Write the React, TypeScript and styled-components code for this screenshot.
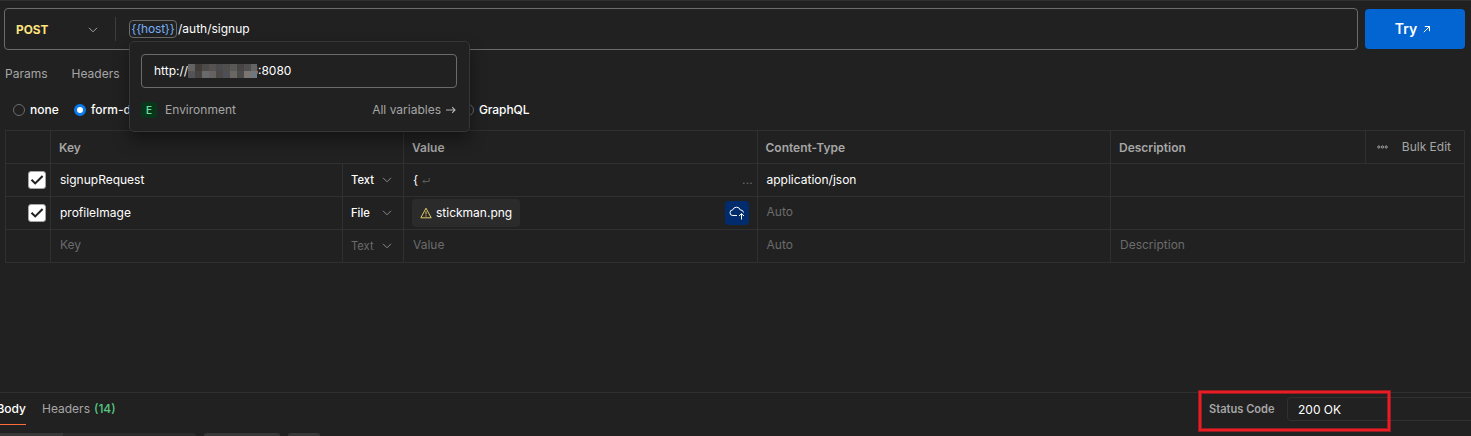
import React from 'react';
import styled, { createGlobalStyle, css } from 'styled-components';

const Global = createGlobalStyle`
  * { box-sizing: border-box; }
  html, body { margin: 0; background: #212121; overflow: hidden; }
  body { font-family: Inter, "Liberation Sans", sans-serif; font-size: 12px; color: #fff; }
`;

const Page = styled.main`
  height: 436px;
  width: 1471px;
  overflow: hidden;
  display: flex;
  flex-direction: column;
  background: #212121;
  border-top: 1px solid #303030;
  padding-top: 1px;
`;

const Text = styled.span<{ $size?: number; $weight?: number; $color?: string; $spacing?: number }>`
  font-size: ${p => p.$size ?? 12}px;
  font-weight: ${p => p.$weight ?? 400};
  color: ${p => p.$color ?? '#fff'};
  letter-spacing: ${p => p.$spacing ?? 0}px;
  line-height: 16px;
  white-space: nowrap;
`;

const RequestBar = styled.header`
  display: flex;
  align-items: center;
  gap: 7px;
  padding: 6px 0 0 4px;
`;

const UrlBox = styled.div`
  position: relative;
  width: 1354px;
  height: 42px;
  border: 1px solid #6b6b6b;
  border-radius: 4px;
  display: flex;
  align-items: center;
`;

const Method = styled.div`
  width: 111px;
  height: 24px;
  padding: 1px 17px 0 11px;
  border-right: 1px solid #3d3d3d;
  display: flex;
  align-items: center;
  justify-content: space-between;
`;

const UrlText = styled.div`
  display: flex;
  align-items: center;
  gap: 1px;
  padding: 0 0 0 13px;
`;

const Variable = styled.span`
  height: 18px;
  width: 48px;
  display: flex;
  align-items: center;
  justify-content: center;
  border: 1px solid #6b6b6b;
  border-radius: 4px;
`;

const TryButton = styled.button`
  width: 100px;
  height: 40px;
  border: 0;
  border-radius: 4px;
  background: #0265d2;
  font-family: inherit;
  padding: 0 4px 0 0;
  display: flex;
  align-items: center;
  justify-content: center;
  gap: 6px;
`;

const Popover = styled.section`
  position: absolute;
  z-index: 2;
  left: 123.5px;
  top: 32px;
  width: 341px;
  height: 91px;
  padding: 12px 11.5px 0;
  background: #212121;
  border: 1px solid #363636;
  border-radius: 5px;
  box-shadow: 0 8px 16px rgba(0, 0, 0, 0.4);
`;

const ValueField = styled.div`
  height: 34px;
  width: 316px;
  display: flex;
  align-items: center;
  padding-left: 12px;
  border: 1px solid #6b6b6b;
  border-radius: 4px;
`;

const Mask = styled.svg`
  display: block;
  flex: none;
  position: relative;
  z-index: 1;
  margin-right: -6.6px;
`;

const PopoverFooter = styled.div`
  display: flex;
  align-items: center;
  height: 16px;
  margin-top: 14px;
  gap: 8px;
`;

const EnvBadge = styled.span`
  width: 16px;
  height: 16px;
  border-radius: 3px;
  background: #07361a;
  display: flex;
  align-items: center;
  justify-content: center;
`;

const AllVariables = styled.span`
  margin-left: auto;
  display: flex;
  align-items: center;
  gap: 4px;
`;

const Tabs = styled.nav`
  display: flex;
  gap: 24px;
  padding: 16px 0 0 5px;
  height: 48px;
`;

const BodyTypes = styled.div`
  display: flex;
  align-items: center;
  height: 24px;
  padding-left: 13px;
`;

const Option = styled.label<{ $width: number }>`
  display: flex;
  align-items: center;
  gap: 5px;
  width: ${p => p.$width}px;
`;

const Radio = styled.span<{ $on?: boolean }>`
  width: 12px;
  height: 12px;
  flex: none;
  border-radius: 50%;
  border: 1px solid #6b6b6b;
  ${p => p.$on && css`
    border: 3px solid #097bed;
    background: #fff;
  `}
`;

const Table = styled.div`
  width: 1460px;
  margin: 8px 0 0 5px;
  border: 1px solid #303030;
  border-bottom: 0;
`;

const Row = styled.div<{ $head?: boolean }>`
  display: grid;
  height: 33px;
  grid-template-columns: ${p => (p.$head ? '45px 353px 354px 353px 255px 98px' : '45px 292px 61px 354px 353px 353px')};
  border-bottom: 1px solid #303030;
`;

const Cell = styled.div<{ $left?: number; $right?: number; $top?: number; $bottom?: number }>`
  display: flex;
  align-items: center;
  min-width: 0;
  padding: ${p => p.$top ?? 0}px ${p => p.$right ?? 0}px ${p => p.$bottom ?? 0}px ${p => p.$left ?? 8}px;
  border-right: 1px solid #303030;
  &:last-child { border-right: 0; }
`;

const Spread = styled(Cell)`
  justify-content: space-between;
`;

const Checkbox = styled.span`
  width: 18px;
  height: 18px;
  border-radius: 3px;
  background: #fff;
  border: 1px solid #a6a6a6;
  display: flex;
  align-items: center;
  justify-content: center;
`;

const FileChip = styled.span`
  display: flex;
  align-items: center;
  gap: 4px;
  height: 28px;
  width: 108px;
  padding-left: 8px;
  border-radius: 4px;
  background: #2b2b2b;
`;

const UploadButton = styled.span`
  width: 24px;
  height: 24px;
  border-radius: 4px;
  background: #002c6e;
  display: flex;
  align-items: center;
  justify-content: center;
`;

const Response = styled.section`
  margin-top: auto;
  height: 44px;
  flex: none;
  border-top: 1px solid #303030;
`;

const ResponseBar = styled.div`
  display: flex;
  height: 40px;
  justify-content: space-between;
`;

const ResponseTabs = styled.div`
  display: flex;
  gap: 16px;
`;

const ResponseTab = styled.div<{ $active?: boolean }>`
  height: 32px;
  padding-top: 8px;
  display: flex;
  gap: 4px;
  border-bottom: 1px solid ${p => (p.$active ? '#ff6c37' : 'transparent')};
  ${p => p.$active && css`
    width: 26px;
    justify-content: flex-end;
  `}
`;

const Status = styled.div`
  position: relative;
  display: flex;
  align-items: flex-start;
  width: 262px;
`;

const StatusLabel = styled.div`
  width: 78px;
  padding-top: 8px;
`;

const StatusValue = styled.div`
  flex: 1;
  height: 24px;
  margin-top: 4px;
  padding: 4px 0 0 10px;
  border: 1px solid #303030;
  border-right: 0;
  border-radius: 4px 0 0 4px;
`;

const Highlight = styled.div`
  position: absolute;
  left: -10px;
  top: -2px;
  width: 191px;
  height: 40px;
  border: 2px solid #ed1c24;
  box-shadow: 0 0 0 1px rgba(237, 28, 36, 0.55), inset 0 0 0 1px rgba(237, 28, 36, 0.55);
`;

const Toolbar = styled.div`
  display: flex;
  gap: 8px;
  height: 3px;
`;

const Segment = styled.div`
  width: 196px;
  background: #2b2b2b;
  border-top-right-radius: 4px;
`;

const SegmentActive = styled.div`
  width: 63px;
  height: 3px;
  background: #383838;
`;

const ToolButton = styled.div<{ $width: number }>`
  width: ${p => p.$width}px;
  border-radius: 4px 4px 0 0;
  background: #383838;
`;

const Chevron = ({ color = '#8a8a8a' }: { color?: string }) => (
  <svg width="10" height="6" viewBox="0 0 10 6" fill="none" stroke={color}>
    <path d="M1 .8l4 4 4-4" />
  </svg>
);

const Tick = () => (
  <svg width="14" height="12" viewBox="0 0 14 12" fill="none" stroke="#212121" strokeWidth="2.1">
    <path d="M1.5 5.8l3.7 3.6L12.6 2" />
  </svg>
);

const maskRows = [
  ['#636363', '#3f3c3a', '#4d4b49', '#555251', '#4b4a4c', '#504f4e', '#595856', '#484446', '#504f50', '#666465'],
  ['#525457', '#474343', '#696a6c', '#656261', '#4c4846', '#4e4f57', '#6a6661', '#4c494b', '#7a7573', '#6f7780'],
];

const MUTED = '#a6a6a6';
const FAINT = '#6b6b6b';

export default function App() {
  return (
    <>
      <Global />
      <Page>
        <RequestBar>
          <UrlBox>
            <Method>
              <Text $weight={700} $color="#ffe47e" $size={11.8}>POST</Text>
              <Chevron color="#a6a6a6" />
            </Method>
            <UrlText>
              <Variable><Text $spacing={-0.2} $color="#74aef6">{'{{host}}'}</Text></Variable>
              <Text>/auth/signup</Text>
            </UrlText>
            <Popover>
              <ValueField>
                <Text>http://</Text>
                <Mask width="69" height="14" shapeRendering="crispEdges">
                  {maskRows.map((row, y) =>
                    row.map((fill, x) => <rect key={`${x}-${y}`} x={x * 7} y={y * 7} width="7" height="7" fill={fill} />),
                  )}
                </Mask>
                <Text>6:8080</Text>
              </ValueField>
              <PopoverFooter>
                <EnvBadge><Text $size={10} $weight={600} $color="#6bdd9a">E</Text></EnvBadge>
                <Text $color={MUTED}>Environment</Text>
                <AllVariables>
                  <Text $color={MUTED}>All variables</Text>
                  <svg width="12" height="10" viewBox="0 0 12 10" fill="none" stroke="#b4b4b4" strokeWidth="1.1">
                    <path d="M1 5h9M7.2 2.2L10 5 7.2 7.8" />
                  </svg>
                </AllVariables>
              </PopoverFooter>
            </Popover>
          </UrlBox>
          <TryButton>
            <Text $size={14} $weight={600}>Try</Text>
            <svg width="8" height="8" viewBox="0 0 8 8" fill="none" stroke="#fff">
              <path d="M.8 7.2L6.5 1.5M1.8 1.5h4.7v4.7" />
            </svg>
          </TryButton>
        </RequestBar>

        <Tabs>
          <Text $color={MUTED}>Params</Text>
          <Text $color={MUTED}>Headers</Text>
        </Tabs>

        <BodyTypes>
          <Option $width={61}><Radio /><Text $weight={500}>none</Text></Option>
          <Option $width={388}><Radio $on /><Text $weight={500}>form-data</Text></Option>
          <Option $width={80}><Radio /><Text $weight={500} $spacing={-0.1}>GraphQL</Text></Option>
        </BodyTypes>

        <Table>
          <Row $head>
            <Cell />
            <Cell $top={2}><Text $weight={600} $color={MUTED}>Key</Text></Cell>
            <Cell $top={2}><Text $weight={600} $color={MUTED}>Value</Text></Cell>
            <Cell $top={2} $left={7.5}><Text $weight={600} $color={MUTED}>Content-Type</Text></Cell>
            <Cell $top={2}><Text $weight={600} $color={MUTED}>Description</Text></Cell>
            <Spread $left={10.5} $right={13}>
              <svg width="11" height="4" viewBox="0 0 11 4" fill="none" stroke="#a6a6a6" strokeWidth="1">
                <circle cx="1.8" cy="2" r="1.1" /><circle cx="5.5" cy="2" r="1.1" /><circle cx="9.2" cy="2" r="1.1" />
              </svg>
              <Text $color={MUTED}>Bulk Edit</Text>
            </Spread>
          </Row>
          <Row>
            <Cell $left={22}><Checkbox><Tick /></Checkbox></Cell>
            <Cell $left={9}><Text>signupRequest</Text></Cell>
            <Spread $right={11}><Text $size={11.2} $weight={500}>Text</Text><Chevron /></Spread>
            <Spread $left={9} $right={4}>
              <span>
                <Text>{'{'}</Text>{' '}
                <svg width="8" height="6" viewBox="0 0 8 6" fill="none" stroke="#6b6b6b" strokeWidth=".8">
                  <path d="M7.2 0v3.5H1M2.8 1.7L1 3.5l1.8 1.8" />
                </svg>
              </span>
              <Text $color={FAINT} $spacing={0.2}>...</Text>
            </Spread>
            <Cell $left={8.5}><Text>application/json</Text></Cell>
            <Cell />
          </Row>
          <Row>
            <Cell $left={22}><Checkbox><Tick /></Checkbox></Cell>
            <Cell $left={9}><Text>profileImage</Text></Cell>
            <Spread $right={11}><Text $size={11.2} $weight={500}>File</Text><Chevron /></Spread>
            <Spread $right={8}>
              <FileChip>
                <svg width="12" height="12" viewBox="0 0 12 12" fill="none" stroke="#e0c867" strokeLinejoin="round">
                  <path d="M6 1.2L11.2 10.8H.8zM6 4.3v3.2M6 8.4v1.1" />
                </svg>
                <Text>stickman.png</Text>
              </FileChip>
              <UploadButton>
                <svg width="16" height="16" viewBox="0 0 16 16" fill="none" stroke="#fff">
                  <path d="M8 10.5H3.9a2.8 2.8 0 0 1-.2-5.6A4 4 0 0 1 11.3 5a3 3 0 0 1 3.2 2.5M12.5 14.5V8.8M10 11l2.5-2.4L15 11" />
                </svg>
              </UploadButton>
            </Spread>
            <Cell $left={8.5} $bottom={2}><Text $color={FAINT}>Auto</Text></Cell>
            <Cell />
          </Row>
          <Row>
            <Cell />
            <Cell $left={9} $bottom={2}><Text $color={FAINT}>Key</Text></Cell>
            <Spread $right={11}><Text $size={11.2} $color={FAINT}>Text</Text><Chevron /></Spread>
            <Cell $left={9} $bottom={2}><Text $color={FAINT}>Value</Text></Cell>
            <Cell $left={8.5} $bottom={2}><Text $color={FAINT}>Auto</Text></Cell>
            <Cell $left={9} $bottom={2}><Text $color={FAINT}>Description</Text></Cell>
          </Row>
        </Table>

        <Response>
          <ResponseBar>
            <ResponseTabs>
              <ResponseTab $active><Text $weight={500}>Body</Text></ResponseTab>
              <ResponseTab>
                <Text $color={MUTED}>Headers</Text>
                <Text $color="#57c785" $weight={500}>(14)</Text>
              </ResponseTab>
            </ResponseTabs>
            <Status>
              <StatusLabel><Text $size={11.1} $weight={600} $color={MUTED}>Status Code</Text></StatusLabel>
              <StatusValue><Text>200 OK</Text></StatusValue>
              <Highlight />
            </Status>
          </ResponseBar>
          <Toolbar>
            <Segment><SegmentActive /></Segment>
            <ToolButton $width={76} />
            <ToolButton $width={32} />
          </Toolbar>
        </Response>
      </Page>
    </>
  );
}
